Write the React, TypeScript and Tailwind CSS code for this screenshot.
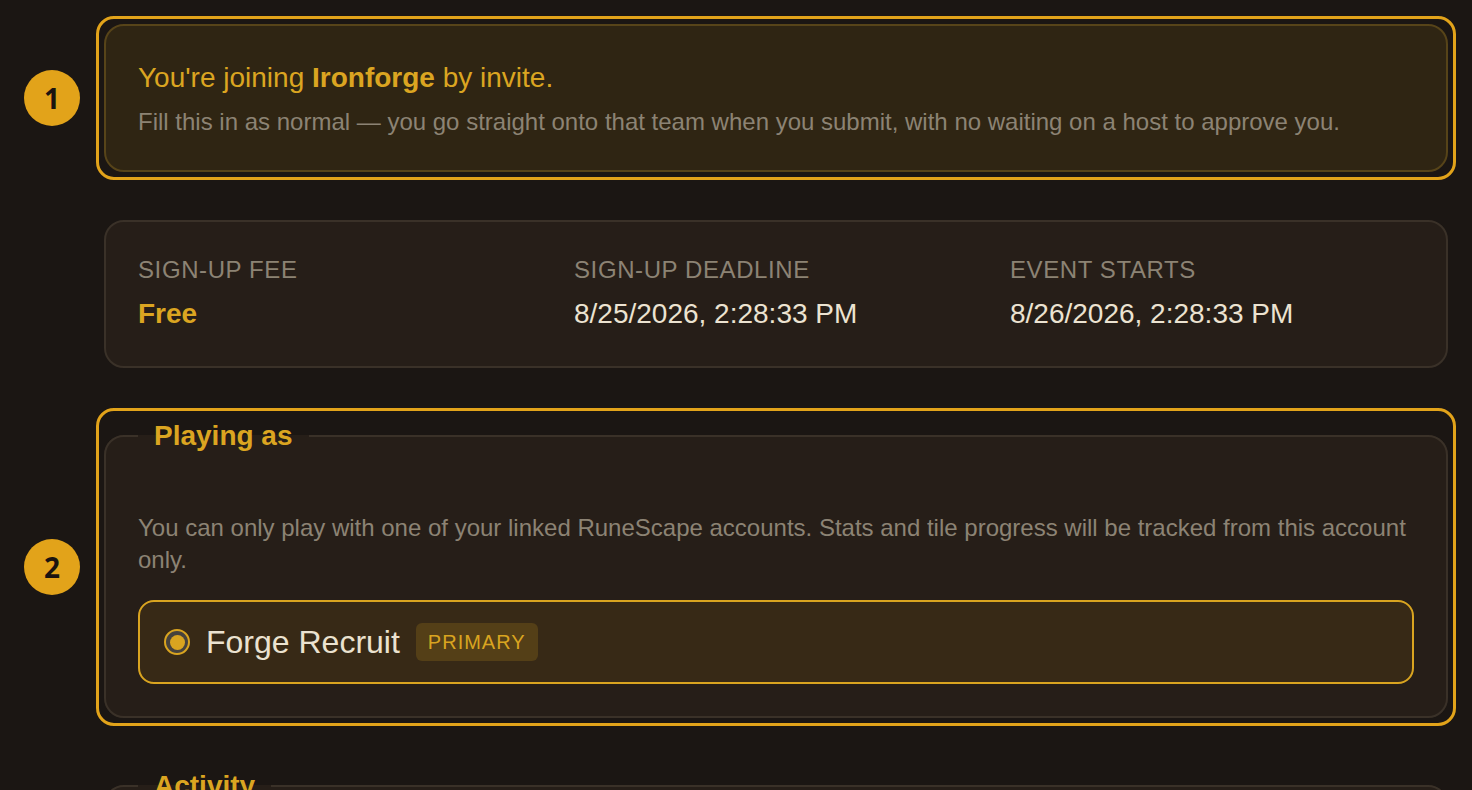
import React from 'react'

type Step = {
  badge?: number
  highlight?: boolean
  children: React.ReactNode
}

const sans = { fontFamily: '"Liberation Sans", Arial, sans-serif' }

function StepRow({ badge, highlight, children }: Step) {
  return (
    <div className="flex items-center gap-4">
      <div className="w-14 shrink-0 flex justify-center">
        {badge !== undefined && (
          <div
            className="w-14 h-14 rounded-full bg-[#e2a31a] text-[#1a1410] flex items-center justify-center text-[28px] font-bold"
            style={{ fontFamily: '"Noto Sans", sans-serif' }}
          >
            {badge}
          </div>
        )}
      </div>
      <div
        className={`flex-1 min-w-0 rounded-[18px] border-[3px] p-[5px] ${
          highlight ? 'border-[#e2a31a]' : 'border-transparent'
        }`}
      >
        {children}
      </div>
    </div>
  )
}

function InfoStat({ label, value, accent }: { label: string; value: string; accent?: boolean }) {
  return (
    <div>
      <div className="text-[24px] leading-8 uppercase tracking-[0.025em] text-[#8c8374]">{label}</div>
      <div
        className={`mt-2 text-[28px] leading-10 ${
          accent ? 'font-bold text-[#dba521]' : 'text-[#ece3d1]'
        }`}
      >
        {value}
      </div>
    </div>
  )
}

export default function App() {
  return (
    <div className="min-h-screen bg-[#1b1613] pl-6 pr-4 pt-4 pb-16" style={sans}>
      <div className="flex flex-col gap-8">
        {/* Invite notice */}
        <StepRow badge={1} highlight>
          <div className="rounded-[20px] border-2 border-[#574419] bg-[#2f2513] p-8">
            <p className="text-[28px] leading-10 text-[#dba521]">
              You're joining <strong className="font-bold">Ironforge</strong> by invite.
            </p>
            <p className="mt-2 text-[24px] leading-8 text-[#8c8374]">
              Fill this in as normal — you go straight onto that team when you submit, with no
              waiting on a host to approve you.
            </p>
          </div>
        </StepRow>

        {/* Event info */}
        <StepRow>
          <div className="rounded-[20px] border-2 border-[#3a3128] bg-[#261e18] p-8 grid grid-cols-3 gap-8">
            <InfoStat label="Sign-up fee" value="Free" accent />
            <InfoStat label="Sign-up deadline" value="8/25/2026, 2:28:33 PM" />
            <InfoStat label="Event starts" value="8/26/2026, 2:28:33 PM" />
          </div>
        </StepRow>

        {/* Account picker */}
        <StepRow badge={2} highlight>
          <fieldset className="rounded-[20px] border-2 border-[#3a3128] bg-[#261e18] px-8 pb-8 pt-0 min-w-0">
            <legend className="px-4 text-[28px] leading-10 font-bold text-[#dba521]">Playing as</legend>
            <p className="mt-14 text-[24px] leading-8 text-[#8c8374]">
              You can only play with one of your linked RuneScape accounts. Stats and tile progress
              will be tracked from this account only.
            </p>
            <label className="mt-6 flex items-center gap-4 rounded-2xl border-2 border-[#d9a420] bg-[#372916] px-6 py-4 cursor-pointer">
              <span className="w-[26px] h-[26px] rounded-full border-2 border-[#d9a420] bg-[#46423d] flex items-center justify-center shrink-0">
                <span className="w-[15px] h-[15px] rounded-full bg-[#d9a420]" />
              </span>
              <span className="text-[32px] leading-[48px] text-[#ebe2d0]">Forge Recruit</span>
              <span className="rounded-md bg-[#543f17] px-3 py-[5px] text-[20px] leading-7 tracking-[0.05em] text-[#d9a420]">
                PRIMARY
              </span>
            </label>
          </fieldset>
        </StepRow>

        {/* Activity */}
        <StepRow>
          <fieldset className="rounded-[20px] border-2 border-[#3a3128] bg-[#261e18] px-8 pb-8 pt-0 min-w-0">
            <legend className="px-4 text-[28px] leading-10 font-bold text-[#dba521]">Activity</legend>
            <p className="mt-14 text-[24px] leading-8 text-[#8c8374]">
              Pick the activity you want to focus on during the event.
            </p>
          </fieldset>
        </StepRow>
      </div>
    </div>
  )
}
